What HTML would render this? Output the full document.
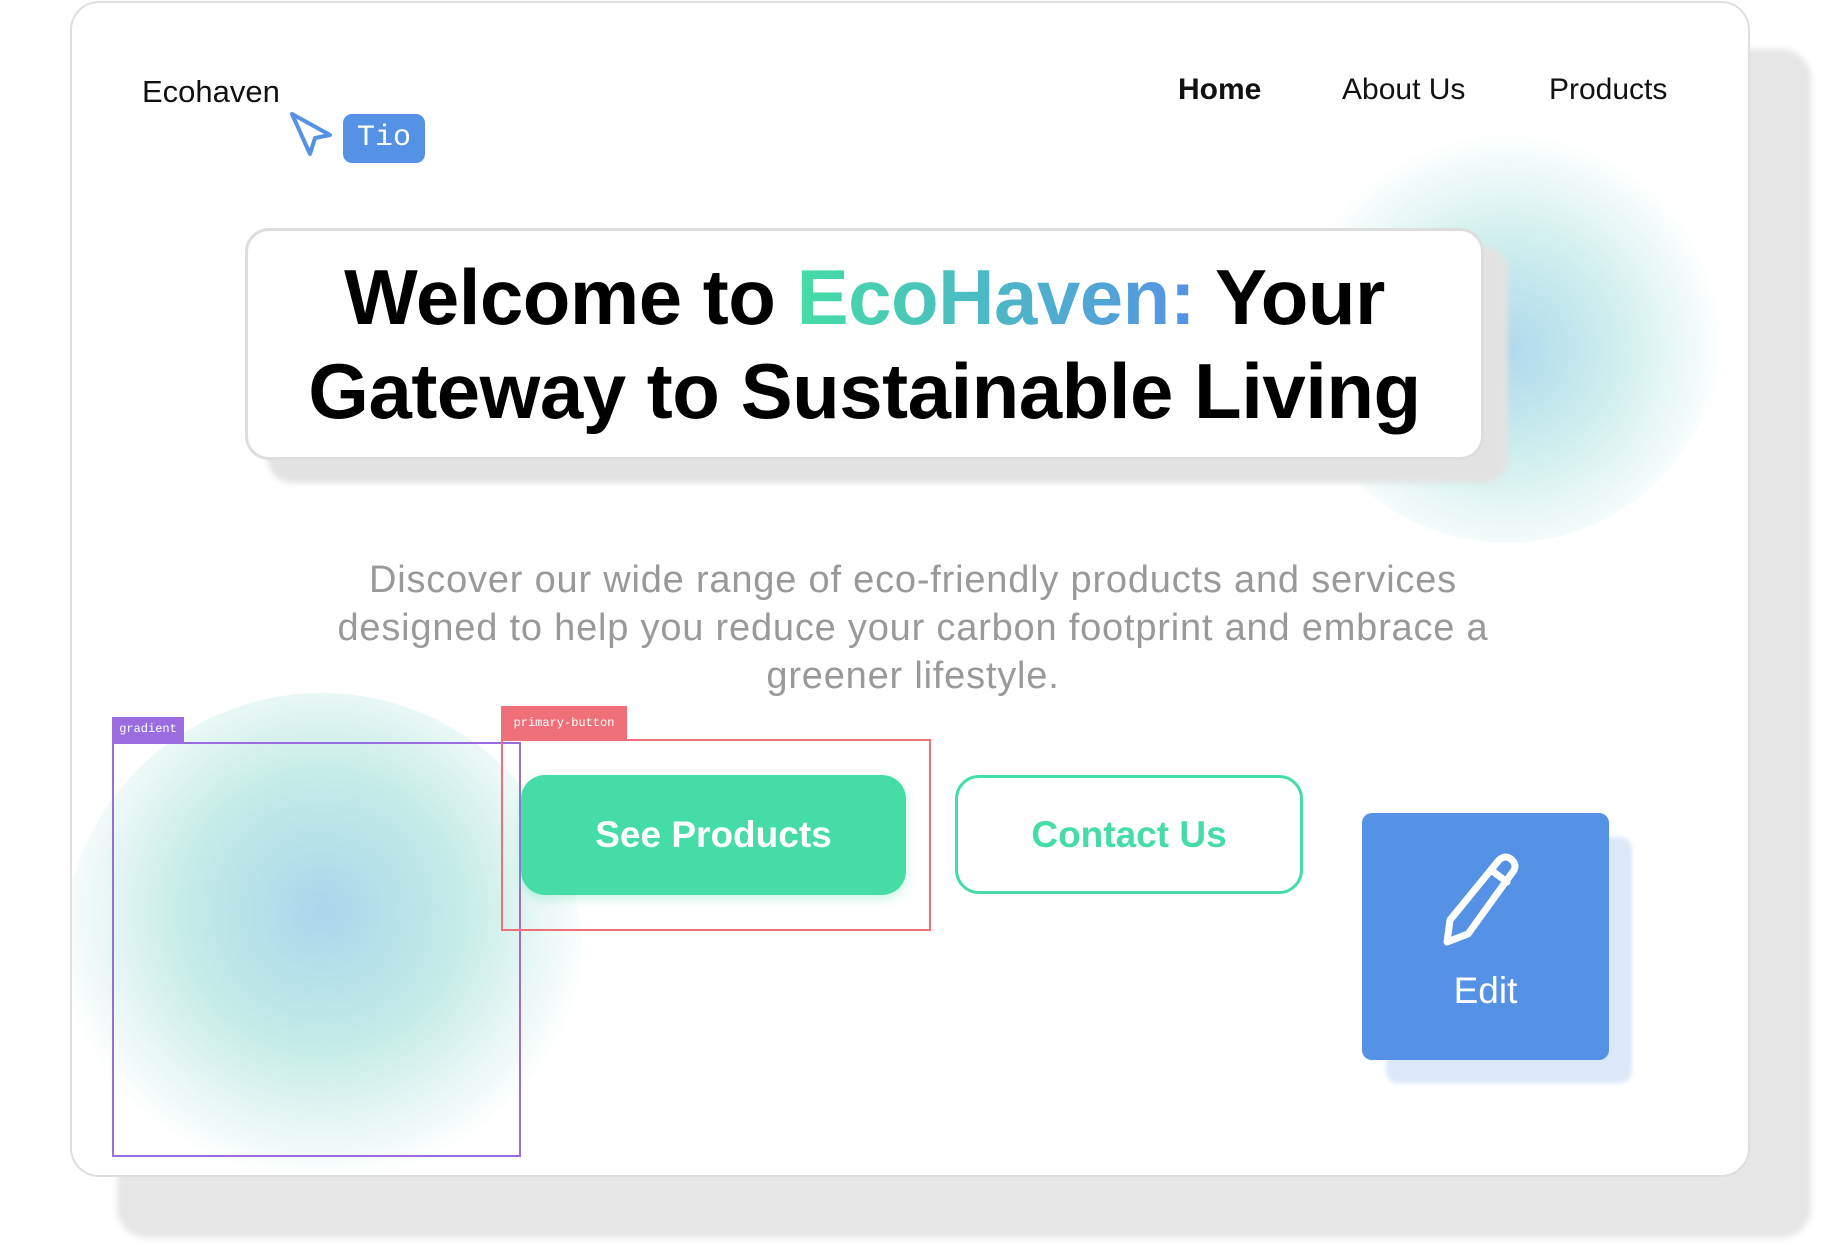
<!DOCTYPE html>
<html><head><meta charset="utf-8"><style>
*{margin:0;padding:0;box-sizing:border-box}
body{width:1827px;height:1257px;background:#fff;position:relative;overflow:hidden;font-family:"Liberation Sans",sans-serif}
.abs{position:absolute}
</style></head><body>
<div class="abs" style="left:117px;top:49px;width:1694px;height:1189px;background:#e6e6e6;border-radius:30px;filter:blur(3px)"></div>
<div class="abs" style="left:70px;top:1px;width:1680px;height:1176px;background:#fff;border:2px solid #dedede;border-radius:29px;overflow:hidden">
  <div class="abs" style="left:1220px;top:110px;width:430px;height:430px;border-radius:50%;background:radial-gradient(circle at 50% 55%,rgba(140,200,230,.7) 0%,rgba(150,220,215,.45) 35%,rgba(255,255,255,0) 68%)"></div>
  <div class="abs" style="left:-10px;top:690px;width:520px;height:520px;border-radius:50%;background:radial-gradient(circle at 50% 42%,rgba(140,200,230,.75) 0%,rgba(150,220,210,.55) 35%,rgba(255,255,255,0) 68%)"></div>
</div>
<div class="abs" style="left:142px;top:74px;font-size:31px;color:#111">Ecohaven</div>
<svg class="abs" style="left:288px;top:110px" width="48" height="50" viewBox="0 0 48 50"><path d="M4 4 L42 25 L27 28 L22 44 Z" fill="none" stroke="#5592e6" stroke-width="4" stroke-linejoin="round"/></svg>
<div class="abs" style="left:343px;top:114px;width:82px;height:49px;background:#5592e6;border-radius:9px;color:#fff;font-family:'Liberation Mono',monospace;font-size:30px;line-height:49px;text-align:center">Tio</div>
<div class="abs" style="left:1178px;top:73px;font-size:30px;color:#111;font-weight:bold">Home</div>
<div class="abs" style="left:1342px;top:73px;font-size:30px;color:#111">About Us</div>
<div class="abs" style="left:1549px;top:73px;font-size:30px;color:#111">Products</div>
<div class="abs" style="left:268px;top:246px;width:1240px;height:237px;background:#e2e2e2;border-radius:24px;filter:blur(3px)"></div>
<div class="abs" style="left:245px;top:228px;width:1239px;height:232px;background:#fff;border:3px solid #ddd;border-radius:24px"></div>
<div class="abs" style="left:225px;top:250px;width:1279px;text-align:center;font-size:78px;font-weight:bold;line-height:94px;color:#000;letter-spacing:-0.5px">Welcome to <span style="background:linear-gradient(90deg,#45dda5,#5592e6);-webkit-background-clip:text;background-clip:text;color:transparent">EcoHaven:</span> Your<br>Gateway to Sustainable Living</div>
<div class="abs" style="left:163px;top:556px;width:1500px;text-align:center;font-size:38px;line-height:48px;color:#999;letter-spacing:0.8px">Discover our wide range of eco-friendly products and services<br>designed to help you reduce your carbon footprint and embrace a<br>greener lifestyle.</div>
<div class="abs" style="left:112px;top:717px;width:72px;height:25px;background:#9b6be0;color:#fff;font-family:'Liberation Mono',monospace;font-size:12px;line-height:25px;text-align:center">gradient</div>
<div class="abs" style="left:112px;top:742px;width:409px;height:415px;border:2px solid #9b6be0"></div>
<div class="abs" style="left:501px;top:706px;width:126px;height:34px;background:#f0707a;color:#fff;font-family:'Liberation Mono',monospace;font-size:12px;line-height:34px;text-align:center">primary-button</div>
<div class="abs" style="left:501px;top:739px;width:430px;height:192px;border:2px solid #f0707a"></div>
<div class="abs" style="left:521px;top:775px;width:385px;height:120px;background:#45dda5;border-radius:24px;color:#fff;font-size:37px;font-weight:bold;line-height:120px;text-align:center;box-shadow:0 4px 10px rgba(69,221,165,.3)">See Products</div>
<div class="abs" style="left:955px;top:775px;width:348px;height:119px;border:3px solid #45dda5;border-radius:24px;color:#45dda5;font-size:37px;font-weight:bold;line-height:113px;text-align:center">Contact Us</div>
<div class="abs" style="left:1386px;top:837px;width:246px;height:246px;background:#dce8f8;border-radius:12px;filter:blur(2px)"></div>
<div class="abs" style="left:1362px;top:813px;width:247px;height:247px;background:#5592e6;border-radius:10px"></div>
<svg class="abs" style="left:1434px;top:848px" width="100" height="100" viewBox="0 0 100 100"><path d="M65 12 Q72 6 78 12 Q84 18 78 25 L34 86 L13 94 L16 72 Z M57 22 L73 34" fill="none" stroke="#fff" stroke-width="7" stroke-linejoin="round" stroke-linecap="round"/></svg>
<div class="abs" style="left:1362px;top:970px;width:247px;text-align:center;color:#fff;font-size:37px">Edit</div>
</body></html>
